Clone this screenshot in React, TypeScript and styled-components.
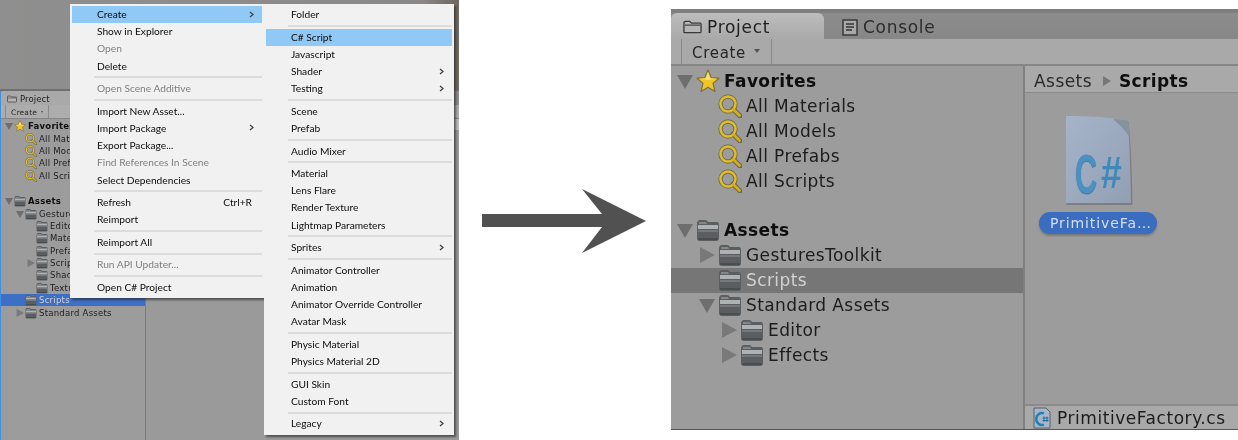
import React from "react";
import styled, { createGlobalStyle } from "styled-components";

const Global = createGlobalStyle`
  html, body { margin: 0; padding: 0; background: #fff; }
  #root { width: 1238px; height: 440px; overflow: hidden; }
`;

const Page = styled.div`
  display: flex;
  width: 1238px;
  height: 440px;
  background: #fff;
  font-family: "DejaVu Sans", sans-serif;
`;

/* ---------- left screenshot ---------- */
const LeftShot = styled.div`
  position: relative;
  flex: none;
  width: 459px;
  height: 440px;
  display: flex;
  flex-direction: column;
  overflow: hidden;
  background: #9a9a9a;
  filter: blur(0.35px);
`;
const SceneArea = styled.div`
  flex: none;
  height: 89px;
  background: linear-gradient(90deg, #8f8f8f 0%, #8c8b8a 60%, #8a8886 92%, #6f6a62 99%);
  border-bottom: 2px solid #6f6f6f;
`;
const LeftProject = styled.div`
  flex: 1;
  display: flex;
  flex-direction: column;
  border-left: 1px solid #3f8fe6;
  min-height: 0;
`;
const LeftTabs = styled.div`
  flex: none;
  height: 14px;
  background: #8d8d8d;
  display: flex;
`;
const LeftTab = styled.div`
  display: flex;
  align-items: center;
  gap: 3px;
  width: 70px;
  padding: 2px 0 0 6px;
  box-sizing: border-box;
  background: #a9a9a9;
  border-radius: 2px 2px 0 0;
  font-size: 8.5px;
  letter-spacing: 0.1px;
  color: #222;
`;
const LeftToolbar = styled.div`
  flex: none;
  height: 14px;
  background: #adadad;
  border-bottom: 1px solid #858585;
  box-sizing: border-box;
  display: flex;
  padding-left: 4px;
`;
const ToolButton = styled.div<{ $small?: boolean }>`
  display: flex;
  align-items: center;
  gap: ${(p) => (p.$small ? 4 : 8)}px;
  padding: ${(p) => (p.$small ? 2 : 3)}px ${(p) => (p.$small ? 5 : 11)}px 0 ${(p) => (p.$small ? 5 : 10)}px;
  border-left: 1px solid #8a8a8a;
  border-right: 1px solid #8a8a8a;
  font-size: ${(p) => (p.$small ? 7.5 : 15)}px;
  letter-spacing: ${(p) => (p.$small ? 0.2 : 0.7)}px;
  color: #262626;
`;
const Caret = styled.span<{ $small?: boolean }>`
  width: 0;
  height: 0;
  margin-bottom: ${(p) => (p.$small ? 2 : 4)}px;
  border-left: ${(p) => (p.$small ? 1.5 : 3)}px solid transparent;
  border-right: ${(p) => (p.$small ? 1.5 : 3)}px solid transparent;
  border-top: ${(p) => (p.$small ? 2 : 4)}px solid #555;
`;
const LeftBody = styled.div`
  flex: 1;
  display: flex;
  min-height: 0;
`;
const LeftTree = styled.div`
  flex: none;
  width: 144px;
  padding-top: 1px;
  border-right: 1px solid #7c7c7c;
  background: #9c9c9c;
`;
const LeftContent = styled.div`
  flex: 1;
  background: linear-gradient(#bdbdbd 0, #bdbdbd 11px, #9a9a9a 11px);
`;

const Row = styled.div<{ $small?: boolean; $level: number; $sel?: "blue" | "gray" }>`
  display: flex;
  align-items: center;
  box-sizing: border-box;
  height: ${(p) => (p.$small ? 12.4 : 25)}px;
  padding-left: ${(p) => (p.$small ? 4 + p.$level * 11 : 6 + p.$level * 22)}px;
  background: ${(p) => (p.$sel === "blue" ? "#3e6fc6" : p.$sel === "gray" ? "#767676" : "transparent")};
`;
const ArrowSlot = styled.span<{ $small?: boolean }>`
  flex: none;
  display: flex;
  align-items: center;
  width: ${(p) => (p.$small ? 9 : 19)}px;
`;
const IconSlot = styled.span<{ $small?: boolean }>`
  flex: none;
  display: flex;
  width: ${(p) => (p.$small ? 12 : 24)}px;
  height: ${(p) => (p.$small ? 12 : 24)}px;
  margin-right: ${(p) => (p.$small ? 2 : 4)}px;
`;
const Label = styled.span<{ $small?: boolean; $bold?: boolean; $light?: boolean }>`
  font-size: ${(p) => (p.$small ? 8.5 : 17)}px;
  font-weight: ${(p) => (p.$bold ? 700 : 400)};
  letter-spacing: ${(p) => (p.$small ? 0.25 : 0.4)}px;
  color: ${(p) => (p.$light ? "#d2d2d2" : p.$bold ? "#0e0e0e" : "#1c1c1c")};
  white-space: nowrap;
`;
const BlankRow = styled.div<{ $h: number }>`
  height: ${(p) => p.$h}px;
`;

/* ---------- context menus ---------- */
const Menu = styled.div<{ $left: number; $width: number }>`
  position: absolute;
  top: 4px;
  left: ${(p) => p.$left}px;
  width: ${(p) => p.$width}px;
  box-sizing: border-box;
  padding: 2px;
  background: #f1f1f1;
  box-shadow: 2px 2px 2px rgba(40, 40, 40, 0.65);
  font-family: "Lato", sans-serif;
`;
const MenuRow = styled.div<{ $active?: boolean; $off?: boolean }>`
  display: flex;
  align-items: center;
  justify-content: space-between;
  box-sizing: border-box;
  height: 17.2px;
  padding: 0 8px 1px 25px;
  font-size: 10.2px;
  color: ${(p) => (p.$off ? "#7f7f7f" : "#0c0c0c")};
  background: ${(p) => (p.$active ? "#90c8f6" : "transparent")};
  white-space: nowrap;
`;
const MenuSep = styled.div`
  height: 2px;
  margin: 1.7px 0 1.7px 22px;
  background: #dcdcdc;
`;
const Shortcut = styled.span`
  margin-right: 2px;
`;

/* ---------- arrow ---------- */
const ArrowArea = styled.div`
  flex: none;
  width: 212px;
  padding: 188px 0 0 23px;
  box-sizing: border-box;
`;

/* ---------- right screenshot ---------- */
const RightShot = styled.div`
  flex: 1;
  height: 420px;
  margin-top: 9px;
  display: flex;
  flex-direction: column;
  background: #9c9c9c;
  border-bottom: 1px solid #555;
  filter: blur(0.5px);
`;
const RightTabs = styled.div`
  flex: none;
  height: 30px;
  box-sizing: border-box;
  padding-top: 4px;
  display: flex;
  background: linear-gradient(#7d7d7d 0, #808080 4px, #8c8c8c 4px, #878787 100%);
`;
const ProjectTab = styled.div`
  display: flex;
  align-items: center;
  gap: 5px;
  width: 153px;
  box-sizing: border-box;
  padding: 2px 0 0 12px;
  background: linear-gradient(#bdbdbd, #a9a9a9);
  border-radius: 6px 6px 0 0;
  font-size: 17px;
  letter-spacing: 0.7px;
  color: #1f1f1f;
`;
const ConsoleTab = styled.div`
  display: flex;
  align-items: center;
  gap: 5px;
  padding: 2px 0 0 18px;
  font-size: 17px;
  letter-spacing: 0.7px;
  color: #2c2c2c;
`;
const RightToolbar = styled.div`
  flex: none;
  height: 27px;
  box-sizing: border-box;
  display: flex;
  padding-left: 10px;
  background: #a9a9a9;
  border-bottom: 2px solid #868686;
`;
const RightBody = styled.div`
  flex: 1;
  display: flex;
  min-height: 0;
`;
const RightTree = styled.div`
  flex: none;
  width: 352px;
  padding-top: 2px;
  border-right: 2px solid #808080;
`;
const AssetColumn = styled.div`
  flex: 1;
  display: flex;
  flex-direction: column;
`;
const Breadcrumb = styled.div`
  flex: none;
  height: 27px;
  display: flex;
  align-items: center;
  gap: 8px;
  padding: 3px 0 0 9px;
  background: #a9a9a9;
  border-bottom: 1px solid #8a8a8a;
  box-sizing: border-box;
  font-size: 17px;
  letter-spacing: 0.45px;
  color: #2a2a2a;
`;
const CrumbArrow = styled.span`
  width: 0;
  height: 0;
  margin: 0 0 0 3px;
  border-top: 5px solid transparent;
  border-bottom: 5px solid transparent;
  border-left: 8px solid #777;
`;
const CrumbBold = styled.b`
  color: #0e0e0e;
  letter-spacing: 0.35px;
`;
const AssetGrid = styled.div`
  flex: 1;
  padding: 22px 0 0 14px;
`;
const Tile = styled.div`
  display: flex;
  flex-direction: column;
  align-items: center;
  width: 118px;
  gap: 7px;
`;
const FileWrap = styled.div`
  position: relative;
  width: 68px;
  height: 90px;
  margin-left: 2px;
`;
const GlyphC = styled.span`
  position: absolute;
  left: 10px;
  top: 32px;
  font-family: "Liberation Sans", sans-serif;
  font-weight: 700;
  font-size: 55px;
  line-height: 55px;
  color: #4a90c2;
  transform: scaleX(0.56);
  transform-origin: left top;
  text-shadow: 0 1px 1px rgba(30, 70, 110, 0.6);
`;
const GlyphSharp = styled.span`
  position: absolute;
  left: 36px;
  top: 36px;
  font-family: "Liberation Sans", sans-serif;
  font-weight: 700;
  font-size: 44px;
  line-height: 44px;
  color: #3f88bc;
  transform: scaleX(0.85);
  transform-origin: left top;
`;
const Pill = styled.div`
  width: 118px;
  height: 22px;
  box-sizing: border-box;
  padding-left: 11px;
  border-radius: 11px;
  background: #3a6cc0;
  box-shadow: 0 2px 2px rgba(60, 60, 60, 0.35);
  color: #d6dff0;
  font-size: 14px;
  line-height: 22px;
  letter-spacing: 0.9px;
  white-space: nowrap;
`;
const FooterBar = styled.div`
  flex: none;
  height: 25px;
  display: flex;
  align-items: center;
  gap: 6px;
  padding: 1px 0 0 8px;
  background: #a9a9a9;
  border-top: 2px solid #8a8a8a;
  box-sizing: border-box;
  font-size: 17px;
  letter-spacing: 0.55px;
  color: #1c1c1c;
`;

/* ---------- drawings ---------- */
const Tri = ({ open, small }: { open?: boolean; small?: boolean }) => {
  const s = small ? 8 : 16;
  return (
    <svg width={s} height={s} viewBox="0 0 16 16">
      {open ? <path d="M0 2H16L8 16Z" fill="#6e6e6e" /> : <path d="M1 0L16 8L1 16Z" fill="#797979" />}
    </svg>
  );
};
const Folder = () => (
  <svg width="100%" height="100%" viewBox="0 0 24 24">
    <path d="M1 6Q1 2 4 2H9Q11 2 12 4H21Q23 4 23 7V20Q23 23 20 23H4Q1 23 1 20Z" fill="#5a5e60" />
    <path d="M2 7H22V11H2Z" fill="#aeb2b3" />
    <path d="M3 4H10L11 6H3Z" fill="#85888a" />
    <path d="M2 12H22V14H2Z" fill="#74787a" />
    <path d="M2 20H22V22H2Z" fill="#4a4d4f" />
  </svg>
);
const Lens = () => (
  <svg width="100%" height="100%" viewBox="0 0 24 24">
    <circle cx="10" cy="10" r="7.5" fill="none" stroke="#77704e" strokeWidth="4.4" />
    <path d="M15 15L22 22" stroke="#6f6844" strokeWidth="5" strokeLinecap="round" />
    <circle cx="10" cy="10" r="7.5" fill="none" stroke="#e0bd2a" strokeWidth="2.4" />
    <path d="M15.5 15.5L21.5 21.5" stroke="#d3ad1f" strokeWidth="2.8" strokeLinecap="round" />
  </svg>
);
const Star = () => (
  <svg width="100%" height="100%" viewBox="0 0 24 24">
    <path
      d="M12 1L15.2 8.5L23 9.2L17 14.4L19 22.5L12 18.2L5 22.5L7 14.4L1 9.2L8.8 8.5Z"
      fill="#f0c526"
      stroke="#7c7040"
      strokeWidth="1.2"
      strokeLinejoin="round"
    />
    <path d="M12 3L14.5 9.5L21 10L12 11L3 10L9.5 9.5Z" fill="#f8df72" />
  </svg>
);
const TabFolder = ({ w, h }: { w: number; h: number }) => (
  <svg width={w} height={h} viewBox="0 0 20 14">
    <path d="M1 3Q1 1 3 1H7L9 3H18Q19 3 19 4V12Q19 13 18 13H2Q1 13 1 12Z" fill="#b6b6b6" stroke="#3a3a3a" strokeWidth="1.4" />
    <path d="M2 5H18" stroke="#3a3a3a" strokeWidth="1.2" />
  </svg>
);
const ConsoleIcon = () => (
  <svg width="16" height="17" viewBox="0 0 16 17">
    <rect x="1" y="1" width="14" height="15" fill="#a8a8a8" stroke="#333" strokeWidth="1.4" />
    <path d="M4 5H12M4 8H12M4 11H10" stroke="#333" strokeWidth="1.3" />
  </svg>
);
const FileIcon = () => (
  <svg width="68" height="90" viewBox="0 0 68 90">
    <defs>
      <linearGradient id="fileFill" x1="0" y1="0" x2="1" y2="1">
        <stop offset="0" stopColor="#a6b4ca" />
        <stop offset="1" stopColor="#929fb3" />
      </linearGradient>
    </defs>
    <path d="M1 1C24 1 46 2 63 6Q66 30 67 89H1Z" fill="#6a6a6a" opacity="0.6" transform="translate(0.5 1)" />
    <path d="M1 1C24 1 46 2 63 6Q65 30 66 88H1Z" fill="url(#fileFill)" />
    <path d="M48 4C54 4 59 5 63 6Q64 14 64.5 22C60 15 54 9 48 4Z" fill="#84939f" />
  </svg>
);
const SmallCs = () => (
  <svg width="18" height="22" viewBox="0 0 18 22">
    <path d="M1 1H13L17 5V21H1Z" fill="#a9b6c9" stroke="#56606c" strokeWidth="1" />
    <path d="M11 6.5A5.5 6 0 1 0 11 17.5" fill="none" stroke="#1f7fb8" strokeWidth="2.4" />
    <path d="M11 9.5V15M14 9.5V15M9.5 11H15.5M9.5 13.5H15.5" stroke="#1f6f9f" strokeWidth="1" />
  </svg>
);

type Item = { label: string; level: number; icon: "star" | "lens" | "folder"; tri?: "open" | "closed"; bold?: boolean; sel?: "blue" | "gray" };

const TreeRow = ({ item, small }: { item: Item; small?: boolean }) => (
  <Row $small={small} $level={item.level} $sel={item.sel}>
    <ArrowSlot $small={small}>{item.tri && <Tri open={item.tri === "open"} small={small} />}</ArrowSlot>
    <IconSlot $small={small}>
      {item.icon === "star" ? <Star /> : item.icon === "lens" ? <Lens /> : <Folder />}
    </IconSlot>
    <Label $small={small} $bold={item.bold} $light={!!item.sel}>
      {item.label}
    </Label>
  </Row>
);

const favorites: Item[] = [
  { label: "Favorites", level: 0, icon: "star", tri: "open", bold: true },
  { label: "All Materials", level: 1, icon: "lens" },
  { label: "All Models", level: 1, icon: "lens" },
  { label: "All Prefabs", level: 1, icon: "lens" },
  { label: "All Scripts", level: 1, icon: "lens" },
];
const leftAssets: Item[] = [
  { label: "Assets", level: 0, icon: "folder", tri: "open", bold: true },
  { label: "GesturesToolkit", level: 1, icon: "folder", tri: "open" },
  { label: "Editor", level: 2, icon: "folder" },
  { label: "Materials", level: 2, icon: "folder" },
  { label: "Prefabs", level: 2, icon: "folder" },
  { label: "Scripts", level: 2, icon: "folder", tri: "closed" },
  { label: "Shaders", level: 2, icon: "folder" },
  { label: "Textures", level: 2, icon: "folder" },
  { label: "Scripts", level: 1, icon: "folder", sel: "blue" },
  { label: "Standard Assets", level: 1, icon: "folder", tri: "closed" },
];
const rightAssets: Item[] = [
  { label: "Assets", level: 0, icon: "folder", tri: "open", bold: true },
  { label: "GesturesToolkit", level: 1, icon: "folder", tri: "closed" },
  { label: "Scripts", level: 1, icon: "folder", sel: "gray" },
  { label: "Standard Assets", level: 1, icon: "folder", tri: "open" },
  { label: "Editor", level: 2, icon: "folder", tri: "closed" },
  { label: "Effects", level: 2, icon: "folder", tri: "closed" },
];

type MI = { t: string; off?: boolean; active?: boolean; sub?: boolean; key?: string } | "-";
const mainMenu: MI[] = [
  { t: "Create", active: true, sub: true },
  { t: "Show in Explorer" },
  { t: "Open", off: true },
  { t: "Delete" },
  "-",
  { t: "Open Scene Additive", off: true },
  "-",
  { t: "Import New Asset..." },
  { t: "Import Package", sub: true },
  { t: "Export Package..." },
  { t: "Find References In Scene", off: true },
  { t: "Select Dependencies" },
  "-",
  { t: "Refresh", key: "Ctrl+R" },
  { t: "Reimport" },
  "-",
  { t: "Reimport All" },
  "-",
  { t: "Run API Updater...", off: true },
  "-",
  { t: "Open C# Project" },
];
const subMenu: MI[] = [
  { t: "Folder" },
  "-",
  { t: "C# Script", active: true },
  { t: "Javascript" },
  { t: "Shader", sub: true },
  { t: "Testing", sub: true },
  "-",
  { t: "Scene" },
  { t: "Prefab" },
  "-",
  { t: "Audio Mixer" },
  "-",
  { t: "Material" },
  { t: "Lens Flare" },
  { t: "Render Texture" },
  { t: "Lightmap Parameters" },
  "-",
  { t: "Sprites", sub: true },
  "-",
  { t: "Animator Controller" },
  { t: "Animation" },
  { t: "Animator Override Controller" },
  { t: "Avatar Mask" },
  "-",
  { t: "Physic Material" },
  { t: "Physics Material 2D" },
  "-",
  { t: "GUI Skin" },
  { t: "Custom Font" },
  "-",
  { t: "Legacy", sub: true },
];

const Chevron = () => (
  <svg width="5" height="7" viewBox="0 0 5 7">
    <path d="M1 1L4 3.5L1 6" fill="none" stroke="#444" strokeWidth="1.3" />
  </svg>
);

const MenuList = ({ items }: { items: MI[] }) => (
  <>
    {items.map((m, i) =>
      m === "-" ? (
        <MenuSep key={i} />
      ) : (
        <MenuRow key={i} $active={m.active} $off={m.off}>
          <span>{m.t}</span>
          {m.sub && <Chevron />}
          {m.key && <Shortcut>{m.key}</Shortcut>}
        </MenuRow>
      )
    )}
  </>
);

export default function App() {
  return (
    <Page>
      <Global />
      <LeftShot>
        <SceneArea />
        <LeftProject>
          <LeftTabs>
            <LeftTab>
              <TabFolder w={10} h={8} />
              Project
            </LeftTab>
          </LeftTabs>
          <LeftToolbar>
            <ToolButton $small>
              Create
              <Caret $small />
            </ToolButton>
          </LeftToolbar>
          <LeftBody>
            <LeftTree>
              {favorites.map((f) => (
                <TreeRow key={f.label} item={f} small />
              ))}
              <BlankRow $h={13} />
              {leftAssets.map((f, i) => (
                <TreeRow key={i} item={f} small />
              ))}
            </LeftTree>
            <LeftContent />
          </LeftBody>
        </LeftProject>
        <Menu $left={70} $width={194}>
          <MenuList items={mainMenu} />
        </Menu>
        <Menu $left={264} $width={190}>
          <MenuList items={subMenu} />
        </Menu>
      </LeftShot>

      <ArrowArea>
        <svg width="166" height="66" viewBox="0 0 166 66">
          <path d="M0 26H120L100 1L164 33L100 65L120 39H0Z" fill="#515151" />
        </svg>
      </ArrowArea>

      <RightShot>
        <RightTabs>
          <ProjectTab>
            <TabFolder w={19} h={14} />
            Project
          </ProjectTab>
          <ConsoleTab>
            <ConsoleIcon />
            Console
          </ConsoleTab>
        </RightTabs>
        <RightToolbar>
          <ToolButton>
            Create
            <Caret />
          </ToolButton>
        </RightToolbar>
        <RightBody>
          <RightTree>
            {favorites.map((f) => (
              <TreeRow key={f.label} item={f} />
            ))}
            <BlankRow $h={24.7} />
            {rightAssets.map((f, i) => (
              <TreeRow key={i} item={f} />
            ))}
          </RightTree>
          <AssetColumn>
            <Breadcrumb>
              Assets
              <CrumbArrow />
              <CrumbBold>Scripts</CrumbBold>
            </Breadcrumb>
            <AssetGrid>
              <Tile>
                <FileWrap>
                  <FileIcon />
                  <GlyphC>C</GlyphC>
                  <GlyphSharp>#</GlyphSharp>
                </FileWrap>
                <Pill>PrimitiveFa…</Pill>
              </Tile>
            </AssetGrid>
            <FooterBar>
              <SmallCs />
              PrimitiveFactory.cs
            </FooterBar>
          </AssetColumn>
        </RightBody>
      </RightShot>
    </Page>
  );
}
